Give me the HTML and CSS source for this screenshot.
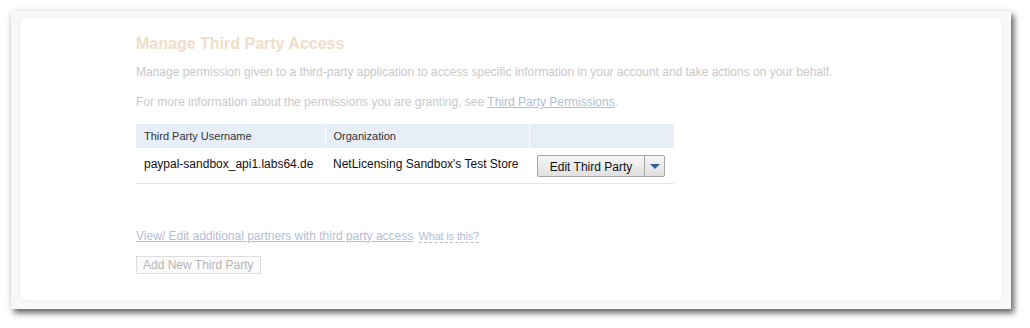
FILE: index.html
```html
<!DOCTYPE html>
<html lang="en">
<head>
    <meta charset="UTF-8">
    <meta name="viewport" content="width=device-width, initial-scale=1.0">
    <title>Manage Third Party Access</title>
    <link rel="stylesheet" href="styles.css">
</head>
<body>
    <div class="window">
        <div class="card">
            <h1 class="page-title">Manage Third Party Access</h1>
            <p class="intro">Manage permission given to a third-party application to access specific information in your account and take actions on your behalf.</p>
            <p class="intro">For more information about the permissions you are granting, see <a href="#" class="soft-link">Third Party Permissions</a>.</p>

            <table class="party-table">
                <thead>
                    <tr>
                        <th class="col-user">Third Party Username</th>
                        <th class="col-org">Organization</th>
                        <th class="col-action"></th>
                    </tr>
                </thead>
                <tbody>
                    <tr>
                        <td>paypal-sandbox_api1.labs64.de</td>
                        <td>NetLicensing Sandbox's Test Store</td>
                        <td class="cell-action">
                            <div class="split-btn">
                                <button class="split-main">Edit Third Party</button>
                                <button class="split-arrow"><span class="caret"></span></button>
                            </div>
                        </td>
                    </tr>
                </tbody>
            </table>

            <div class="partners">
                <a href="#" class="soft-link">View/ Edit additional partners with third party access</a>
                <span class="help">What is this?</span>
            </div>

            <button class="add-btn">Add New Third Party</button>
        </div>
    </div>
</body>
</html>
```

FILE: styles.css
```css
* {
    margin: 0;
    padding: 0;
    box-sizing: border-box;
}

body {
    font-family: 'Liberation Sans', Arial, sans-serif;
    background: #ffffff;
    width: 1030px;
    height: 328px;
    overflow: hidden;
}

.window {
    margin: 11px 0 0 11px;
    width: 1000px;
    height: 298px;
    background: #f6f8fa;
    padding: 6px 8px 8px 8px;
    box-shadow: 3px 4px 6px rgba(0, 0, 0, 0.6), 0 0 8px rgba(0, 0, 0, 0.08);
}

.card {
    height: 100%;
    background: #ffffff;
    border: 1px solid #f0f2f4;
    border-radius: 6px;
    padding: 16px 0 0 116px;
}

.page-title {
    font-size: 16px;
    font-weight: bold;
    color: #f1ddca;
    line-height: 20px;
    margin-bottom: 10px;
}

.intro {
    font-size: 12px;
    color: #c9c9c9;
    line-height: 16px;
    margin-bottom: 14px;
}

.soft-link {
    color: #b3bdd6;
    text-decoration: underline;
}

.party-table {
    width: 538px;
    border-collapse: collapse;
}

.party-table th {
    background: #e8eef8;
    font-size: 11px;
    font-weight: normal;
    color: #333333;
    text-align: left;
    height: 24px;
    padding: 0 8px;
    border-right: 1px solid #ffffff;
}

.party-table th:last-child {
    border-right: none;
}

.col-user { width: 189px; }
.col-org { width: 204px; }

.party-table td {
    font-size: 12px;
    color: #111111;
    height: 35px;
    padding: 0 8px 2px 8px;
    border-bottom: 1px solid #e6e6e6;
    vertical-align: middle;
}

.party-table td.cell-action {
    padding: 2px 8px 0 8px;
}

.split-btn {
    display: flex;
    width: 128px;
    height: 22px;
    border: 1px solid #a7a7a7;
    border-radius: 2px;
    background: linear-gradient(to bottom, #f7f7f7, #e0e0e0);
}

.split-btn button {
    border: none;
    background: transparent;
    font-family: inherit;
    font-size: 12px;
    color: #111111;
    cursor: pointer;
}

.split-main {
    flex: 1;
    padding-top: 1px;
}

.split-arrow {
    width: 20px;
    border-left: 1px solid #a7a7a7 !important;
    display: flex;
    align-items: center;
    justify-content: center;
}

.caret {
    width: 0;
    height: 0;
    border-left: 5px solid transparent;
    border-right: 5px solid transparent;
    border-top: 5px solid #2f5f9c;
}

.partners {
    margin-top: 44px;
    font-size: 12px;
    line-height: 16px;
}

.help {
    font-size: 11px;
    color: #b3bdd6;
    border-bottom: 1px dashed #b3bdd6;
    margin-left: 2px;
    letter-spacing: -0.2px;
}

.add-btn {
    margin-top: 12px;
    height: 18px;
    padding: 0 6px;
    font-family: inherit;
    font-size: 12px;
    color: #b5b5b5;
    background: #fbfbfb;
    border: 1px solid #dddddd;
}
```
